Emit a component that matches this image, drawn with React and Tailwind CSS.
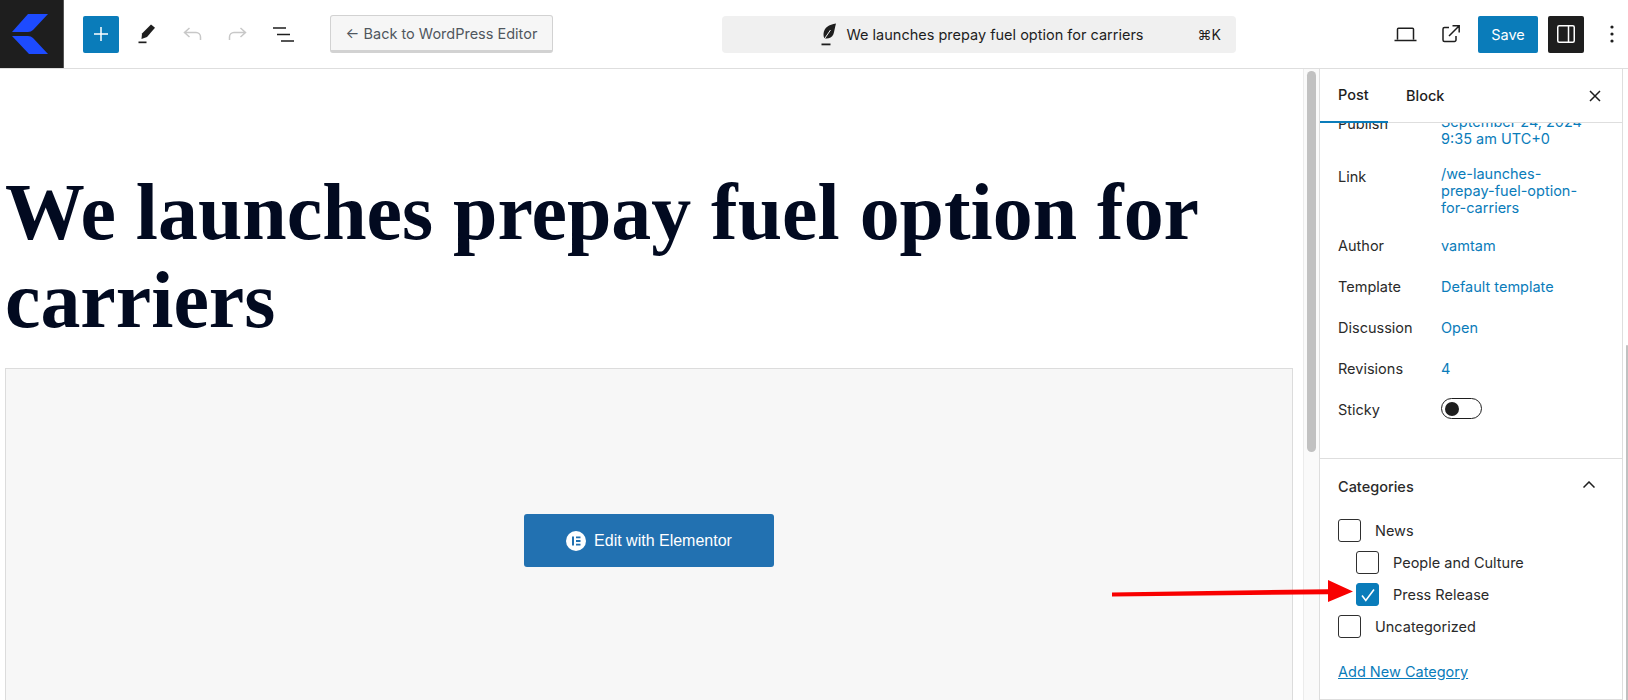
import React from "react";

const F = { fontFamily: 'Inter, "Liberation Sans", sans-serif' };

function Row({ label, children, className = "", labelClass = "" }) {
  return (
    <div className={"flex " + className}>
      <div className={"w-[103px] shrink-0 text-[#2a2a2a] leading-[17px] " + labelClass}>{label}</div>
      <div className="text-[#0a7cba] w-[146px] leading-[17px]">{children}</div>
    </div>
  );
}

function Check({ label, indent, checked }) {
  return (
    <div className={"flex items-center h-[23px] " + (indent ? "ml-[18px]" : "")}>
      <div className={"w-[23px] h-[23px] rounded-[3px] flex items-center justify-center border " + (checked ? "bg-[#0a7cba] border-[#0a7cba]" : "bg-white border-[#2f2f2f]")}>
        {checked && (
          <svg width="16" height="16" viewBox="0 0 16 16" fill="none" stroke="#fff" strokeWidth="1.6"><path d="M2 8.5l3.8 5L14 2.5" /></svg>
        )}
      </div>
      <span className="ml-[14px] text-[#2a2a2a]">{label}</span>
    </div>
  );
}

export default function App() {
  return (
    <div className="relative w-[1628px] h-[700px] overflow-hidden bg-white text-[14.5px]" style={F}>
      <header className="flex items-center h-[69px] border-b border-[#dedede] relative">
        <div className="w-[64px] h-[68px] bg-[#1e1e1e] border-r border-[#555] shrink-0 flex items-center pl-[12px]">
          <svg width="36" height="40" viewBox="0 0 36 40">
            <path d="M0 18 L16 0 L36 0 L21 16 Q19 18 16 18Z" fill="#1d4bff" />
            <path d="M0 22 L16 22 Q19 22 21 24 L36 40 L17 40Z" fill="#1d4bff" />
          </svg>
        </div>
        <div className="ml-[19px] w-[36px] h-[37px] rounded-[2px] bg-[#0a7cba] flex items-center justify-center">
          <svg width="14" height="14" viewBox="0 0 14 14" stroke="#fff" strokeWidth="1.5"><path d="M7 0v14M0 7h14" /></svg>
        </div>
        <svg className="ml-[19px]" width="18" height="20" viewBox="0 0 18 20" fill="#1e1e1e">
          <path d="M13 0.5l4 3.2-8 9.3-5.5 2 0.5-5.5z" />
          <rect x="0.5" y="17.5" width="8" height="1.7" />
        </svg>
        <svg className="ml-[27px]" width="19" height="14" viewBox="0 0 19 14" fill="none" stroke="#c8c8c8" strokeWidth="1.5">
          <path d="M6.5 1L1.5 5.5l5 4.5M1.5 5.5H13c2.5 0 4.5 2 4.5 4.5V13" />
        </svg>
        <svg className="ml-[26px]" width="19" height="14" viewBox="0 0 19 14" fill="none" stroke="#c8c8c8" strokeWidth="1.5">
          <path d="M12.5 1l5 4.5-5 4.5M17.5 5.5H6C3.5 5.5 1.5 7.5 1.5 10v3" />
        </svg>
        <svg className="ml-[26px]" width="21" height="15" viewBox="0 0 21 15" stroke="#1e1e1e" strokeWidth="1.5">
          <path d="M0 1h13M4 7.5h13M8 14h13" />
        </svg>
        <div className="ml-[36px] w-[223px] h-[38px] rounded-[3px] border border-[#d2d2d2] border-b-[3px] bg-[#f6f6f6] flex items-center justify-center pt-[1px] text-[#50575e]">
          ← Back to WordPress Editor
        </div>
        <div className="ml-[169px] w-[514px] h-[37px] rounded-[4px] bg-[#f0f0f0] relative flex items-center justify-center pl-[6px] pt-[1px] text-[#1e1e1e]">
          <svg className="mr-[10px]" width="16" height="23" viewBox="0 0 16 23" fill="none">
            <path d="M15 0.5C8 1.5 3 4.5 2.5 11c-.1 1.5.2 3 .8 4.2 3.5 1 7.5-.3 9-3.8 1.2-3 1.5-7 2.7-10.9z" fill="#1e1e1e" />
            <path d="M3 16.5L9.5 7" stroke="#f0f0f0" strokeWidth="1" />
            <rect x="0.5" y="20.5" width="9" height="1.8" fill="#1e1e1e" />
          </svg>
          <span>We launches prepay fuel option for carriers</span>
          <span className="absolute right-[15px] text-[14px]">⌘K</span>
        </div>
        <svg className="ml-[158px]" width="23" height="15" viewBox="0 0 23 15" fill="none" stroke="#1e1e1e" strokeWidth="1.5">
          <path d="M3.5 12.5V2.2c0-.5.4-1 1-1h14c.5 0 1 .5 1 1v10.3M0.5 13.5h22" />
        </svg>
        <svg className="ml-[25px]" width="18" height="18" viewBox="0 0 18 18" fill="none" stroke="#1e1e1e" strokeWidth="1.5">
          <path d="M7 2.5H2.5a1.5 1.5 0 0 0-1.5 1.5v11a1.5 1.5 0 0 0 1.5 1.5h10a1.5 1.5 0 0 0 1.5-1.5v-4M7 11L17 1M10.5 0.8H17.2V7.5" />
        </svg>
        <div className="ml-[18px] w-[60px] h-[37px] rounded-[2px] bg-[#0a7cba] text-white flex items-center justify-center pt-[1px]">Save</div>
        <div className="ml-[10px] w-[36px] h-[37px] rounded-[2px] bg-[#1e1e1e] flex items-center justify-center">
          <svg width="18" height="18" viewBox="0 0 18 18" fill="none" stroke="#fff" strokeWidth="1.5">
            <rect x="0.75" y="0.75" width="16.5" height="16.5" rx="1.5" /><path d="M11.5 1v16" />
          </svg>
        </div>
        <svg className="ml-[26px]" width="4" height="18" viewBox="0 0 4 18" fill="#1e1e1e">
          <circle cx="2" cy="2" r="1.6" /><circle cx="2" cy="9" r="1.6" /><circle cx="2" cy="16" r="1.6" />
        </svg>
      </header>

      <div className="flex h-[631px]">
        <main className="w-[1303px] shrink-0 pl-[5px] pr-[10px] overflow-hidden">
          <h1 className="pt-[99px] text-[79.85px] leading-[88px] font-bold text-[#020a20] h-[299px]" style={{ fontFamily: '"Liberation Serif", serif' }}>
            We launches prepay fuel option for carriers
          </h1>
          <div className="h-[400px] bg-[#f7f7f7] border border-[#dcdcdc] flex justify-center pt-[145px]">
            <div className="w-[250px] h-[53px] rounded-[3px] bg-[#2271b1] text-white flex items-center justify-center gap-[8px] text-[16px]" style={{ fontFamily: '"Liberation Sans", sans-serif' }}>
              <svg width="20" height="20" viewBox="0 0 20 20">
                <circle cx="10" cy="10" r="10" fill="#fff" />
                <path d="M6 5.5h2v9H6zM10 5.5h4.5v1.8H10zM10 9.1h4.5v1.8H10zM10 12.7h4.5v1.8H10z" fill="#2271b1" />
              </svg>
              Edit with Elementor
            </div>
          </div>
        </main>

        <div className="w-[16px] shrink-0 bg-[#fafafa] border-l border-[#ececec] flex justify-center pt-[2px]">
          <div className="w-[9px] h-[381px] rounded-full bg-[#c1c1c1]" />
        </div>

        <aside className="w-[304px] shrink-0 border-x border-[#dedede] border-b flex flex-col overflow-hidden">
          <div className="h-[54px] shrink-0 flex items-center relative border-b border-[#dedede] bg-white z-10 text-[#1e1e1e] font-medium">
            <div className="w-[68px] h-[54px] flex items-center pl-[18px] border-b-[2px] border-[#0a7cba] shrink-0">Post</div>
            <div className="ml-[18px]">Block</div>
            <svg className="absolute right-[21px]" width="12" height="12" viewBox="0 0 12 12" stroke="#1e1e1e" strokeWidth="1.5"><path d="M1 1l10 10M11 1L1 11" /></svg>
          </div>
          <div className="px-[18px] -mt-[10px]">
            <Row label="Publish" labelClass="pt-[2px]">September 24, 2024<br />9:35 am UTC+0</Row>
            <Row label="Link" labelClass="pt-[3px]" className="mt-[18px]">/we-launches-<br />prepay-fuel-option-<br />for-carriers</Row>
            <Row label="Author" className="mt-[21px]">vamtam</Row>
            <Row label="Template" className="mt-[24px]">Default template</Row>
            <Row label="Discussion" className="mt-[24px]">Open</Row>
            <Row label="Revisions" className="mt-[24px]">4</Row>
            <div className="flex mt-[21px] text-[#2a2a2a] leading-[17px]">
              <div className="w-[103px] pt-[3px]">Sticky</div>
              <div className="w-[41px] h-[21px] rounded-full border border-[#1e1e1e] flex items-center pl-[3px]">
                <div className="w-[14px] h-[14px] rounded-full bg-[#1e1e1e]" />
              </div>
            </div>
          </div>
          <div className="border-t border-[#dedede] mt-[39px] px-[18px]">
            <div className="flex items-center justify-between h-[54px] font-medium text-[#2a2a2a]">
              <span className="pt-[1px]">Categories</span>
              <svg className="mr-[9px] -mt-[4px]" width="12" height="7" viewBox="0 0 12 7" fill="none" stroke="#1e1e1e" strokeWidth="1.5"><path d="M0.5 6.5L6 1l5.5 5.5" /></svg>
            </div>
            <div className="flex flex-col gap-[9px] mt-[6px]">
              <Check label="News" />
              <Check label="People and Culture" indent />
              <Check label="Press Release" indent checked />
              <Check label="Uncategorized" />
            </div>
            <div className="mt-[25px] text-[#0a7cba] underline leading-[17px]">Add New Category</div>
          </div>
        </aside>

        <div className="flex-1 flex justify-end items-start pt-[276px]">
          <div className="w-[2px] h-[360px] rounded-full bg-[#c1c1c1]" />
        </div>
      </div>

      <svg className="absolute left-[1110px] top-[578px]" width="245" height="26" viewBox="0 0 245 26" fill="#f80000">
        <path d="M2 14.5 L218 11.2 L218 2 L243 13.5 L218 24 L218 16.2 L2 18.5Z" />
      </svg>
    </div>
  );
}
